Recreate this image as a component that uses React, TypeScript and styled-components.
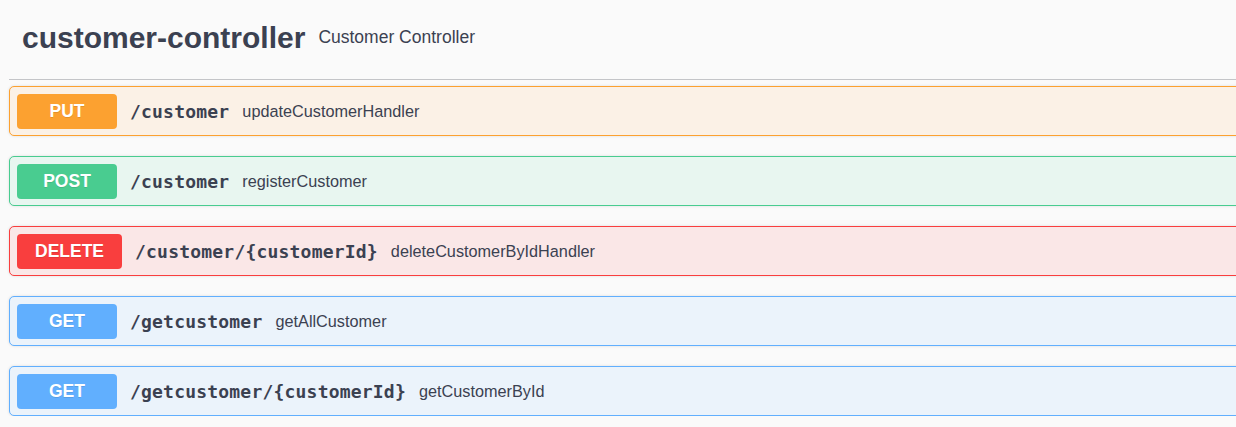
import styled, { createGlobalStyle } from "styled-components";

const GlobalStyle = createGlobalStyle`
  body {
    margin: 0;
    background: #fafafa;
    overflow: hidden;
    font-family: "Liberation Sans", Arial, sans-serif;
    color: #3b4151;
  }
`;

const Wrapper = styled.div`
  padding-left: 9px;
  overflow: hidden;
`;

const Header = styled.div`
  display: flex;
  align-items: center;
  gap: 13px;
  height: 80px;
  box-sizing: border-box;
  padding: 0 0 4px 13px;
  border-bottom: 1px solid #c4c5c8;
  margin-right: -20px;
`;

const TagTitle = styled.h3`
  margin: 0;
  font-size: 30px;
  font-weight: 700;
  color: #3b4151;
`;

const TagDesc = styled.small`
  font-size: 17.5px;
  color: #3b4151;
`;

const OpList = styled.div`
  margin: 6px -20px 0 0;
  display: flex;
  flex-direction: column;
  gap: 20px;
`;

interface Palette {
  main: string;
  bg: string;
}

const palettes: Record<string, Palette> = {
  PUT: { main: "#fca130", bg: "#fbf1e6" },
  POST: { main: "#49cc90", bg: "#e8f6f0" },
  DELETE: { main: "#f93e3e", bg: "#fae7e7" },
  GET: { main: "#61affe", bg: "#ebf3fb" },
};

const OpBlock = styled.div<{ $method: string }>`
  display: flex;
  align-items: center;
  height: 50px;
  box-sizing: border-box;
  padding: 0 7px;
  border: 1px solid ${(p) => palettes[p.$method].main};
  border-radius: 5px;
  background: ${(p) => palettes[p.$method].bg};
  box-shadow: 0 0 3px rgba(0, 0, 0, 0.12);
`;

const Method = styled.span<{ $method: string }>`
  min-width: 100px;
  height: 35px;
  box-sizing: border-box;
  padding: 0 18px;
  display: flex;
  align-items: center;
  justify-content: center;
  border-radius: 4px;
  background: ${(p) => palettes[p.$method].main};
  color: #fff;
  font-size: 17.5px;
  font-weight: 700;
  text-shadow: 0 1px 0 rgba(0, 0, 0, 0.1);
`;

const Path = styled.span`
  padding: 0 13px;
  font-family: "DejaVu Sans Mono", "Liberation Mono", monospace;
  font-size: 18px;
  font-weight: 700;
  letter-spacing: 0.2px;
  color: #3b4151;
`;

const Summary = styled.span`
  font-size: 16.25px;
  color: #3b4151;
`;

const operations = [
  { method: "PUT", path: "/customer", summary: "updateCustomerHandler" },
  { method: "POST", path: "/customer", summary: "registerCustomer" },
  { method: "DELETE", path: "/customer/{customerId}", summary: "deleteCustomerByIdHandler" },
  { method: "GET", path: "/getcustomer", summary: "getAllCustomer" },
  { method: "GET", path: "/getcustomer/{customerId}", summary: "getCustomerById" },
];

function App() {
  return (
    <Wrapper>
      <GlobalStyle />
      <Header>
        <TagTitle>customer-controller</TagTitle>
        <TagDesc>Customer Controller</TagDesc>
      </Header>
      <OpList>
        {operations.map((op, i) => (
          <OpBlock key={i} $method={op.method}>
            <Method $method={op.method}>{op.method}</Method>
            <Path>{op.path}</Path>
            <Summary>{op.summary}</Summary>
          </OpBlock>
        ))}
      </OpList>
    </Wrapper>
  );
}

export default App;
